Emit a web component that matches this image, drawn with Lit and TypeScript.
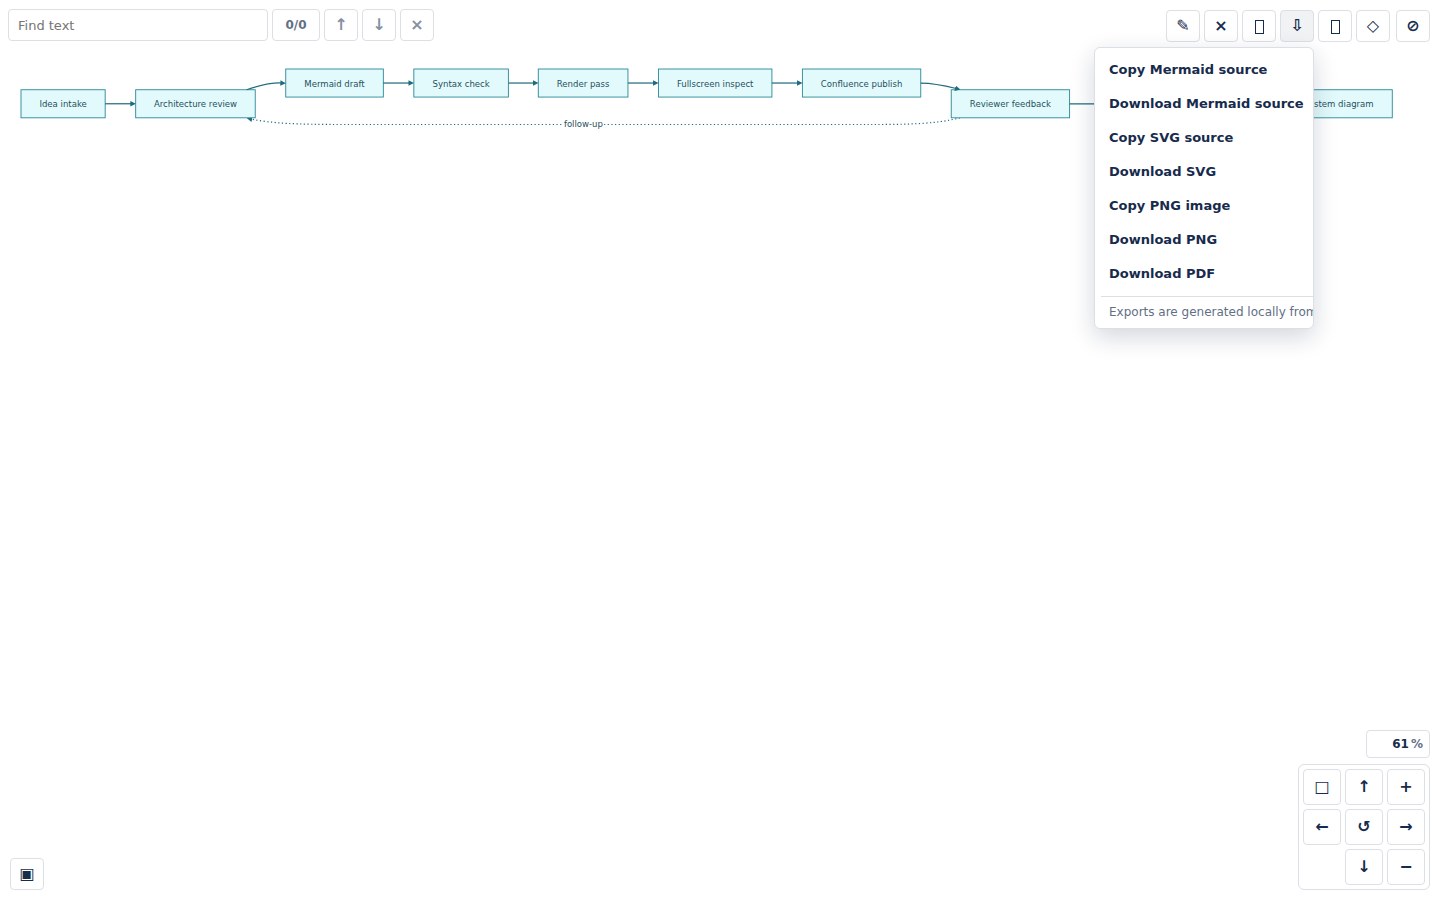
import { LitElement, html, svg, css } from "lit";
import { customElement, state } from "lit/decorators.js";

interface DiagramNode {
  label: string;
  x: number;
  y: number;
  width: number;
}

const NODE_HEIGHT = 46;

const NODES: DiagramNode[] = [
  { label: "Idea intake", x: 0, y: 34, width: 138 },
  { label: "Architecture review", x: 188, y: 34, width: 196 },
  { label: "Mermaid draft", x: 434, y: 0, width: 160 },
  { label: "Syntax check", x: 644, y: 0, width: 155 },
  { label: "Render pass", x: 848, y: 0, width: 147 },
  { label: "Fullscreen inspect", x: 1045, y: 0, width: 186 },
  { label: "Confluence publish", x: 1281, y: 0, width: 194 },
  { label: "Reviewer feedback", x: 1525, y: 34, width: 194 },
  { label: "System diagram", x: 2072, y: 34, width: 176 },
];

const EDGES = [
  "M138 57H181",
  "M370 34Q406 22 427 23",
  "M594 23H637",
  "M799 23H841",
  "M995 23H1038",
  "M1231 23H1274",
  "M1475 23Q1498 23 1533 32",
  "M1719 57H2065",
];

const EXPORTS = [
  "Copy Mermaid source",
  "Download Mermaid source",
  "Copy SVG source",
  "Download SVG",
  "Copy PNG image",
  "Download PNG",
  "Download PDF",
];

@customElement("flow-diagram")
export class FlowDiagram extends LitElement {
  static properties = { zoom: { type: Number } };
  declare zoom: number;

  static styles = css`
    :host {
      display: block;
    }
    svg {
      display: block;
      overflow: visible;
    }
    .node {
      fill: #e3fafc;
      stroke: #2b8a99;
      stroke-width: 1.5;
    }
    .label {
      font-size: 14px;
      fill: #24505e;
      text-anchor: middle;
    }
    .edge {
      fill: none;
      stroke: #1f6b7d;
      stroke-width: 2;
    }
    .dotted {
      stroke-dasharray: 2 4;
    }
    .head {
      fill: #1f6b7d;
    }
    .label-back {
      fill: #fff;
    }
  `;

  render() {
    const scale = this.zoom / 100;
    return html`
      <svg
        role="img"
        aria-label="Publishing workflow"
        viewBox="0 0 2250 100"
        width=${2250 * scale}
        height=${100 * scale}
      >
        <defs>
          <marker id="arrow" viewBox="0 0 10 10" refX="2" refY="5" markerWidth="9" markerHeight="9"
            markerUnits="userSpaceOnUse" orient="auto">
            <path class="head" d="M0 0L10 5L0 10Z"></path>
          </marker>
        </defs>
        <path class="edge dotted" marker-end="url(#arrow)"
          d="M1539 80C1500 91 1440 91 1390 91H530C450 91 410 89 377 82"></path>
        <rect class="label-back" x="888" y="80" width="68" height="20"></rect>
        <text class="label" x="922" y="95">follow-up</text>
        ${NODES.map(
          (n) => svg`
            <rect class="node" x=${n.x} y=${n.y} width=${n.width} height=${NODE_HEIGHT}></rect>
            <text class="label" x=${n.x + n.width / 2} y=${n.y + 29}>${n.label}</text>`
        )}
        ${EDGES.map((d) => svg`<path class="edge" marker-end="url(#arrow)" d=${d}></path>`)}
      </svg>
    `;
  }
}

@customElement("app-root")
export class AppRoot extends LitElement {
  @state() private zoom = 61;
  @state() private menuOpen = true;

  static styles = css`
    :host {
      display: flex;
      flex-direction: column;
      min-height: 100vh;
      box-sizing: border-box;
      background: #fff;
      color: #172b4d;
      font-family: "DejaVu Sans", sans-serif;
      font-size: 13px;
    }
    *,
    *::before {
      box-sizing: border-box;
    }
    button,
    input {
      font: inherit;
      color: inherit;
      margin: 0;
    }
    header,
    footer {
      display: flex;
      justify-content: space-between;
    }
    .find,
    .tools {
      display: flex;
      align-items: flex-start;
      gap: 4px;
    }
    .find {
      padding: 9px 8px;
    }
    .tools {
      padding: 10px;
    }
    .field,
    .count,
    .btn,
    .percent,
    .pad {
      background: #fff;
      border: 1px solid #dcdfe4;
      border-radius: 4px;
    }
    .field {
      width: 260px;
      height: 32px;
      padding: 0 9px;
    }
    .field::placeholder {
      color: #757575;
      opacity: 1;
    }
    .count {
      width: 48px;
      height: 32px;
      display: flex;
      align-items: center;
      justify-content: center;
      font-size: 12px;
      font-weight: 700;
      color: #626f86;
    }
    .btn {
      width: 34px;
      height: 32px;
      padding: 0;
      display: flex;
      align-items: center;
      justify-content: center;
      font-size: 16px;
      font-weight: 700;
      line-height: 1;
    }
    .btn:disabled {
      color: #8590a2;
    }
    .btn.active {
      background: #f1f2f4;
    }
    .close {
      margin-left: 2px;
    }
    .export {
      position: relative;
    }
    .menu {
      position: absolute;
      z-index: 1;
      top: 37px;
      right: 0;
      width: 220px;
      padding: 6px;
      display: flex;
      flex-direction: column;
      gap: 2px;
      overflow: hidden;
      background: #fff;
      border: 1px solid #dcdfe4;
      border-radius: 6px;
      box-shadow: 0 8px 24px rgba(9, 30, 66, 0.18);
    }
    .item {
      height: 32px;
      padding: 0 8px 2px;
      border: 0;
      background: none;
      text-align: left;
      font-weight: 700;
      white-space: nowrap;
    }
    .hint {
      align-self: flex-start;
      margin: 4px 0 0;
      padding: 8px 8px 3px;
      border-top: 1px solid #dcdfe4;
      font-size: 12px;
      line-height: 14px;
      color: #626f86;
      white-space: nowrap;
    }
    main {
      flex: 1;
      padding: 17px 21px;
    }
    footer {
      align-items: flex-end;
      padding: 10px;
    }
    .nav {
      display: flex;
      flex-direction: column;
      align-items: flex-end;
      gap: 6px;
    }
    .percent {
      display: flex;
      align-items: center;
      justify-content: flex-end;
      gap: 2px;
      width: 64px;
      height: 28px;
      padding: 0 6px;
      font-size: 12px;
      font-weight: 700;
      color: #626f86;
    }
    .value {
      width: 32px;
      padding: 0;
      border: 0;
      background: none;
      color: #172b4d;
      text-align: right;
    }
    .pad {
      display: grid;
      grid-template-columns: repeat(3, 38px);
      grid-auto-rows: 36px;
      gap: 4px;
      padding: 4px;
      border-radius: 6px;
    }
    .pad .btn {
      width: auto;
      height: auto;
    }
    .down {
      grid-column: 2;
    }
    .glyph {
      display: block;
      fill: none;
      stroke: currentColor;
    }
  `;

  private changeZoom(step: number) {
    this.zoom = Math.max(10, this.zoom + step);
  }

  private frameIcon() {
    return html`<svg class="glyph" width="9" height="16" viewBox="0 0 9 16" aria-hidden="true">
      <rect x="0.5" y="2.5" width="8" height="13"></rect>
    </svg>`;
  }

  render() {
    return html`
      <header>
        <div class="find">
          <input class="field" type="text" placeholder="Find text" aria-label="Find text" />
          <span class="count">0/0</span>
          <button class="btn" aria-label="Previous match" disabled>↑</button>
          <button class="btn" aria-label="Next match" disabled>↓</button>
          <button class="btn" aria-label="Clear search" disabled>×</button>
        </div>
        <div class="tools">
          <button class="btn" aria-label="Edit">✎</button>
          <button class="btn" aria-label="Exit">×</button>
          <button class="btn" aria-label="Copy">${this.frameIcon()}</button>
          <div class="export">
            <button
              class="btn active"
              aria-label="Export"
              aria-expanded=${this.menuOpen}
              @click=${() => (this.menuOpen = !this.menuOpen)}
            >⇩</button>
            ${this.menuOpen
              ? html`<div class="menu">
                  ${EXPORTS.map((label) => html`<button class="item">${label}</button>`)}
                  <p class="hint">Exports are generated locally from the diagram.</p>
                </div>`
              : null}
          </div>
          <button class="btn" aria-label="Theme">${this.frameIcon()}</button>
          <button class="btn" aria-label="Shapes">◇</button>
          <button class="btn close" aria-label="Disable">⊘</button>
        </div>
      </header>
      <main><flow-diagram .zoom=${this.zoom}></flow-diagram></main>
      <footer>
        <button class="btn" aria-label="Minimap">▣</button>
        <div class="nav">
          <label class="percent">
            <input class="value" type="text" aria-label="Zoom percent" .value=${String(this.zoom)} />
            <span>%</span>
          </label>
          <div class="pad">
            <button class="btn" aria-label="Fit">□</button>
            <button class="btn" aria-label="Pan up">↑</button>
            <button class="btn" aria-label="Zoom in" @click=${() => this.changeZoom(5)}>+</button>
            <button class="btn" aria-label="Pan left">←</button>
            <button class="btn" aria-label="Reset">↺</button>
            <button class="btn" aria-label="Pan right">→</button>
            <button class="btn down" aria-label="Pan down">↓</button>
            <button class="btn" aria-label="Zoom out" @click=${() => this.changeZoom(-5)}>−</button>
          </div>
        </div>
      </footer>
    `;
  }
}
